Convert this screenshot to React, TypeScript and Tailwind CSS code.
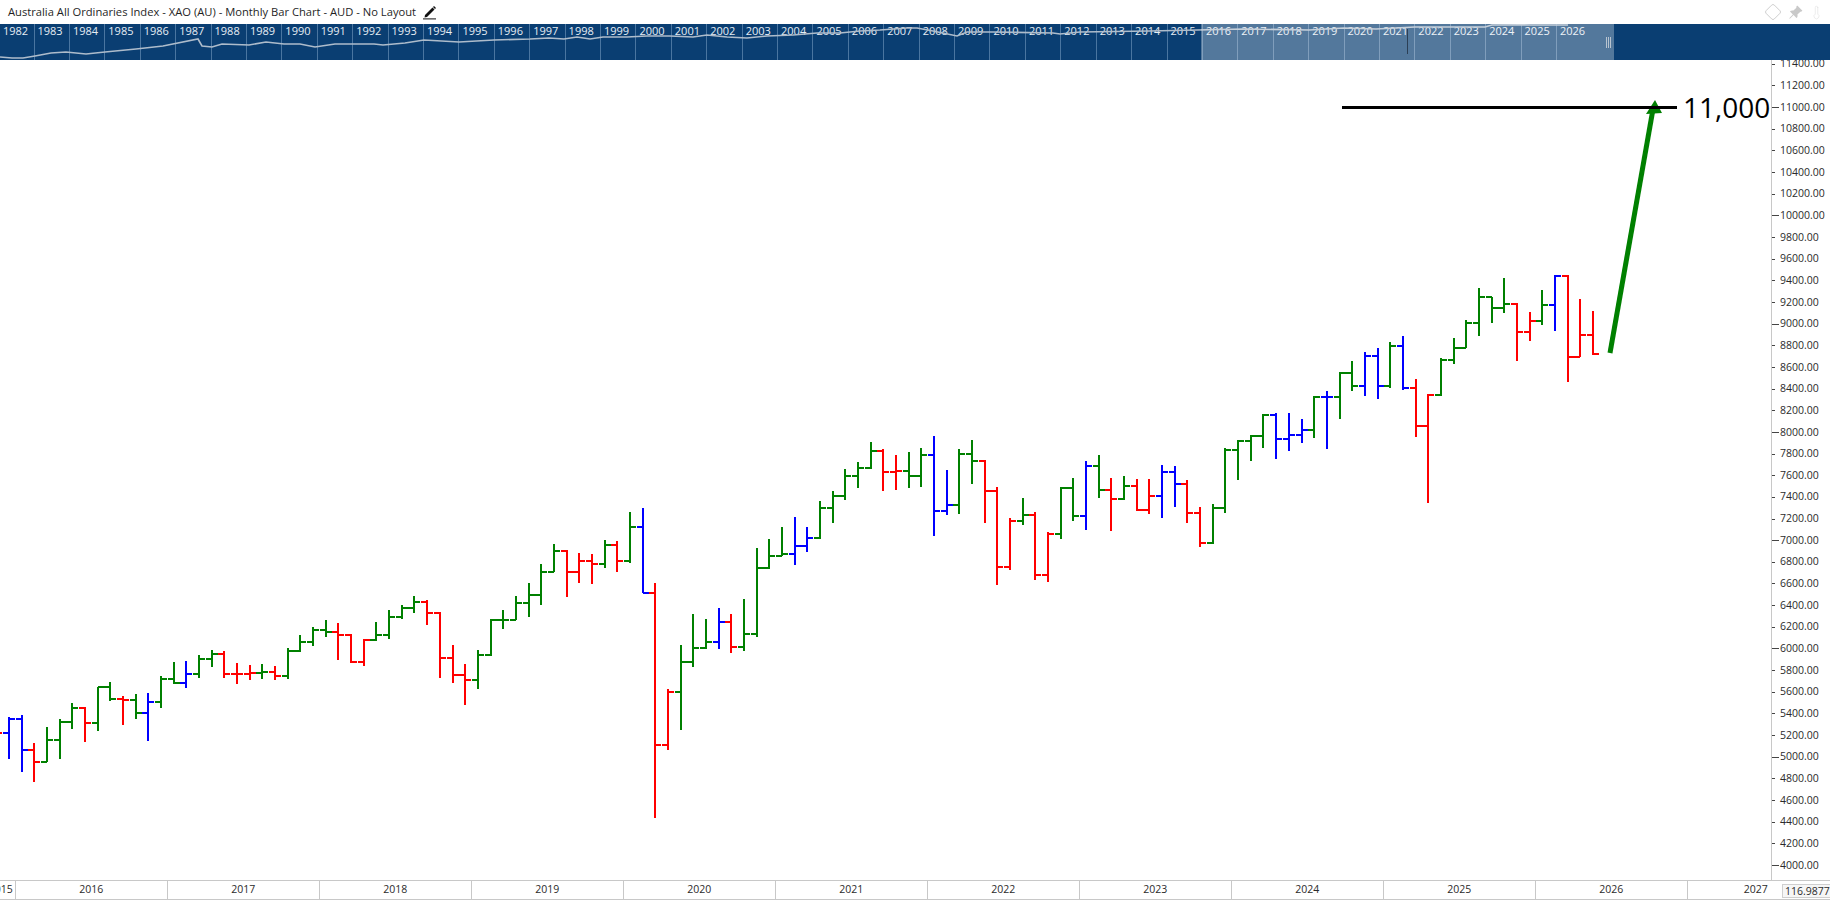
import React from "react";
import { Diamond, Thermometer } from "lucide-react";
import { BsPinAngleFill } from "react-icons/bs";

const G = "#008000";
const R = "#ff0000";
const B = "#0000ff";

// x, top, bottom, open, close, colour (page pixels)
const bars: [number, number, number, number | null, number, string][] = [
  [-4, 700, 750, null, 733, R],
  [9, 717, 759, 733, 719, B],
  [22, 715, 772, 719, 750, B],
  [34, 743, 782, 750, 762, R],
  [47, 727, 762, 762, 740, G],
  [60, 719, 759, 740, 722, G],
  [72, 703, 729, 722, 708, G],
  [85, 707, 742, 708, 723, R],
  [98, 687, 731, 723, 687, G],
  [110, 682, 701, 687, 699, G],
  [123, 696, 725, 699, 700, R],
  [136, 694, 719, 700, 713, G],
  [148, 693, 741, 713, 702, B],
  [161, 676, 708, 702, 679, G],
  [174, 662, 684, 679, 683, G],
  [186, 661, 688, 683, 674, B],
  [199, 655, 678, 674, 659, G],
  [212, 650, 667, 659, 654, G],
  [224, 651, 678, 654, 674, R],
  [237, 663, 684, 674, 674, R],
  [250, 665, 680, 674, 673, R],
  [262, 664, 679, 673, 672, G],
  [275, 666, 680, 672, 676, R],
  [288, 648, 679, 676, 651, G],
  [300, 635, 652, 651, 642, G],
  [313, 627, 646, 642, 630, G],
  [326, 620, 637, 630, 632, G],
  [338, 623, 660, 632, 635, R],
  [351, 634, 663, 635, 662, R],
  [364, 639, 666, 662, 640, R],
  [376, 622, 641, 640, 635, G],
  [389, 610, 639, 635, 617, G],
  [402, 605, 619, 617, 608, G],
  [414, 596, 613, 608, 602, G],
  [427, 600, 625, 602, 613, R],
  [440, 612, 678, 613, 658, R],
  [453, 645, 683, 658, 675, R],
  [465, 664, 705, 675, 680, R],
  [478, 650, 689, 680, 655, G],
  [491, 619, 656, 655, 620, G],
  [503, 610, 629, 620, 620, G],
  [516, 596, 620, 620, 603, G],
  [529, 583, 617, 603, 595, G],
  [541, 564, 605, 595, 572, G],
  [554, 544, 572, 572, 551, G],
  [567, 550, 597, 551, 572, R],
  [579, 553, 583, 572, 561, R],
  [592, 554, 584, 561, 564, R],
  [605, 540, 568, 564, 545, G],
  [617, 541, 572, 545, 561, R],
  [630, 512, 563, 561, 527, G],
  [643, 508, 593, 527, 593, B],
  [655, 583, 818, 593, 745, R],
  [668, 689, 750, 745, 692, R],
  [681, 645, 730, 692, 662, G],
  [693, 614, 667, 662, 648, G],
  [706, 619, 649, 648, 642, G],
  [719, 608, 649, 642, 622, B],
  [731, 614, 653, 622, 647, R],
  [744, 599, 651, 647, 634, G],
  [757, 548, 637, 634, 568, G],
  [769, 539, 569, 568, 556, G],
  [782, 527, 556, 556, 554, G],
  [795, 517, 565, 554, 546, B],
  [807, 527, 552, 546, 538, B],
  [820, 501, 539, 538, 508, G],
  [833, 491, 523, 508, 496, G],
  [845, 469, 500, 496, 476, G],
  [858, 462, 488, 476, 468, G],
  [871, 442, 469, 468, 451, G],
  [883, 449, 491, 451, 472, R],
  [896, 455, 490, 472, 471, R],
  [909, 452, 488, 471, 476, G],
  [921, 448, 487, 476, 455, G],
  [934, 436, 536, 455, 511, B],
  [947, 470, 515, 511, 505, B],
  [959, 449, 514, 505, 454, G],
  [972, 440, 484, 454, 461, G],
  [985, 460, 523, 461, 491, R],
  [997, 487, 585, 491, 567, R],
  [1010, 518, 570, 567, 521, R],
  [1023, 498, 525, 521, 515, G],
  [1035, 512, 580, 515, 575, R],
  [1048, 532, 582, 575, 534, R],
  [1061, 487, 539, 534, 488, G],
  [1073, 478, 521, 488, 516, G],
  [1086, 461, 530, 516, 466, B],
  [1099, 455, 498, 466, 490, G],
  [1111, 478, 531, 490, 499, R],
  [1124, 476, 500, 499, 486, G],
  [1137, 479, 511, 486, 510, R],
  [1149, 479, 514, 510, 496, R],
  [1162, 465, 518, 496, 472, B],
  [1175, 466, 507, 472, 484, B],
  [1187, 480, 523, 484, 513, R],
  [1200, 507, 547, 513, 543, R],
  [1213, 504, 544, 543, 508, G],
  [1225, 448, 513, 508, 450, G],
  [1238, 440, 480, 450, 441, G],
  [1251, 435, 461, 441, 436, G],
  [1263, 414, 448, 436, 415, G],
  [1276, 413, 459, 415, 439, B],
  [1289, 413, 451, 439, 435, B],
  [1302, 419, 443, 435, 430, B],
  [1314, 396, 438, 430, 397, G],
  [1327, 391, 449, 397, 397, B],
  [1340, 372, 419, 397, 373, G],
  [1352, 361, 391, 373, 386, G],
  [1365, 352, 396, 386, 356, B],
  [1378, 348, 399, 356, 386, B],
  [1390, 342, 388, 386, 346, G],
  [1403, 336, 390, 346, 388, B],
  [1416, 379, 437, 388, 426, R],
  [1428, 394, 503, 426, 395, R],
  [1441, 358, 396, 395, 360, G],
  [1454, 338, 364, 360, 348, G],
  [1466, 320, 348, 348, 323, G],
  [1479, 288, 336, 323, 297, G],
  [1492, 297, 323, 297, 308, G],
  [1504, 278, 313, 308, 304, G],
  [1517, 303, 361, 304, 332, R],
  [1530, 312, 341, 332, 321, R],
  [1542, 290, 325, 321, 305, G],
  [1555, 275, 331, 305, 276, B],
  [1568, 275, 382, 276, 357, R],
  [1580, 299, 357, 357, 335, R],
  [1593, 311, 355, 335, 354, R],
];

const overview =
  "0,33 12,34 23,34 35,32 51,29 66,28 86,30 105,28 136,25 163,22 198,15 202,22 212,23 222,20 249,21 266,18 284,20 300,20 315,23 335,20 374,20 383,21 405,19 424,16 459,18 494,16 530,15 549,14 564,15 577,13 590,15 603,13 627,13 647,12 670,12 693,13 707,11 727,13 747,14 767,12 793,11 817,9 840,9 860,7 880,6 907,4 917,4 933,7 957,12 967,8 993,8 1053,9 1060,10 1080,8 1150,7 1243,5 1309,6 1344,4 1376,5 1415,3 1485,3 1492,1 1520,0.8 1531,1 1568,1";

const navYears = Array.from({ length: 45 }, (_, i) => 1982 + i);
const axisYears = Array.from({ length: 11 }, (_, i) => 2016 + i);
const axisValues = Array.from({ length: 38 }, (_, i) => 11400 - i * 200);

function Chart() {
  return (
    <svg
      className="block w-[1771px] h-[820px] flex-none"
      viewBox="0 60 1771 820"
      fill="none"
    >
      <g strokeWidth={2} shapeRendering="crispEdges">
        {bars.map(([x, top, bottom, open, close, color]) => (
          <path
            key={x}
            stroke={color}
            d={`M${x} ${top}V${bottom}${open === null ? "" : `M${x - 6} ${open}H${x}`}M${x} ${close}H${x + 6}`}
          />
        ))}
      </g>
      <line x1={1610} y1={353} x2={1652.5} y2={112} stroke={G} strokeWidth={5} />
      <polygon points="1655,100 1646,114 1662,113" fill={G} />
      <line x1={1342} y1={107.5} x2={1677} y2={107.5} stroke="#000" strokeWidth={3} />
      <text x={1683} y={117.5} fill="#000" fontSize={28} fontFamily="'Open Sans', sans-serif">
        11,000
      </text>
    </svg>
  );
}

export default function App() {
  return (
    <div className="flex h-[900px] w-[1830px] flex-col overflow-hidden bg-white font-['Open_Sans',sans-serif] text-[10.5px] text-[#2b2b2b]">
      <div className="flex h-6 flex-none items-center pl-2">
        <span className="text-[11.2px] text-[#1f1f1f]">Australia All Ordinaries Index - XAO (AU) - Monthly Bar Chart - AUD - No Layout</span>
        <svg className="ml-[6px] h-[15px] w-[15px]" viewBox="0 0 15 15">
          <polygon points="3,10 10.5,2.5 12.5,4.5 5,12 2.5,12.5" fill="#111" />
          <polygon points="11,2 12,1 14,3 13,4" fill="#111" />
          <rect x="1" y="13.4" width="13" height="1" fill="#111" />
        </svg>
        <div className="ml-auto flex items-center gap-[4px] pr-[6px]">
          <Diamond size={18} strokeWidth={1.1} className="text-[#c4c4c4]" />
          <BsPinAngleFill size={15} className="ml-[2px] text-[#c9c9c9]" />
          <Thermometer size={15} strokeWidth={1.2} className="ml-[2px] text-[#e6e6e6]" />
        </div>
      </div>

      <div className="relative h-9 flex-none bg-[#0a3e72] text-[11px] text-[#e6edf4]">
        <div className="flex h-full">
          {navYears.map((y, i) => (
            <div
              key={y}
              className={
                i === 0
                  ? "h-full w-[33.5px] flex-none pl-[3px] leading-[14px]"
                  : "h-full w-[35.42px] flex-none border-l border-[#4a75a0] pl-[3px] leading-[14px]"
              }
            >
              {y}
            </div>
          ))}
        </div>
        <svg className="absolute left-0 top-0 h-[36px] w-[1570px]" viewBox="0 0 1570 36" fill="none">
          <polyline points={overview} stroke="#aebccb" strokeWidth={1.6} />
        </svg>
        <div className="absolute bottom-0 left-[1201px] top-0 w-[413px] bg-white/30">
          <div className="absolute left-[206px] top-[5px] h-[25px] w-px bg-[#2b3f55]" />
          <div className="absolute right-[3px] top-[13px] flex h-[11px] gap-px">
            <span className="w-px bg-[#b8c4d0]" />
            <span className="w-px bg-[#b8c4d0]" />
            <span className="w-px bg-[#b8c4d0]" />
          </div>
        </div>
      </div>

      <div className="flex h-[820px] flex-none">
        <Chart />
        <div className="h-full w-[59px] flex-none overflow-hidden border-l border-[#c8c8c8]">
          <div className="-mt-[6.6px] flex flex-col">
            {axisValues.map((v) => (
              <div key={v} className="flex h-[21.658px] flex-none items-center">
                <span className="flex w-2 flex-none">
                  <span className={v % 1000 === 0 ? "h-px w-[7px] bg-[#444]" : "h-px w-[3px] bg-[#444]"} />
                </span>
                <span className="whitespace-nowrap">{v}.00</span>
              </div>
            ))}
          </div>
        </div>
      </div>

      <div className="relative flex h-5 flex-none border-y border-[#c8c8c8]">
        <div className="flex w-[14.67px] flex-none items-center justify-end overflow-hidden whitespace-nowrap pr-[2px]">2015</div>
        {axisYears.map((y) => (
          <div key={y} className="flex w-[152.03px] flex-none items-center justify-center border-l border-[#c8c8c8]">
            {y}
          </div>
        ))}
        <div className="flex w-[137px] flex-none items-center justify-center border-l border-[#c8c8c8]">2027</div>
        <div className="absolute left-[1782px] top-[3px] h-[14px] w-[50px] border border-[#cfcfcf] bg-[#f6f6f6] pl-[2px] leading-[12px] whitespace-nowrap">
          116.9877
        </div>
      </div>
    </div>
  );
}
